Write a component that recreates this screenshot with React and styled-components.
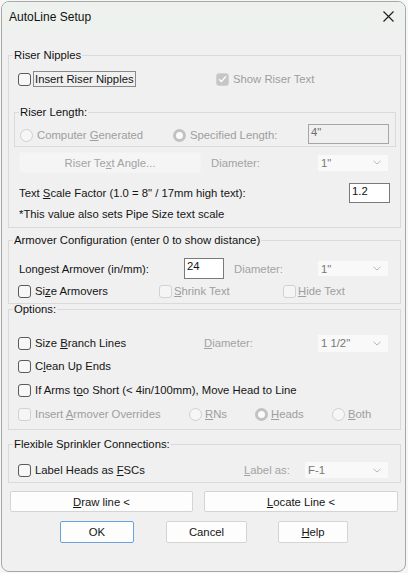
import React from "react";
import styled, { createGlobalStyle, css } from "styled-components";

const Global = createGlobalStyle`
  html, body { margin: 0; padding: 0; background: #f6f6f6; }
  body { font-family: "Liberation Sans", Arial, sans-serif; font-size: 11px; color: #1a1a1a; }
  * { box-sizing: border-box; }
`;

const FS = "11.3px";

const Page = styled.div`
  padding: 1px 0 0 1px;
`;

const Window = styled.div`
  width: 405px;
  height: 571px;
  border: 1px solid #a8a8a8;
  border-radius: 8px;
  background: #f0f0f0;
  overflow: hidden;
  display: flex;
  flex-direction: column;
`;

const TitleBar = styled.div`
  height: 29px;
  flex: none;
  background: #eef2ee;
  display: flex;
  align-items: center;
  justify-content: space-between;
  padding: 0 11px 0 7px;
`;

const Title = styled.span`
  font-size: 12px;
  color: #111;
`;

const Body = styled.div`
  padding: 17px 4px 0 6px;
  display: flex;
  flex-direction: column;
`;

const Group = styled.fieldset`
  margin: ${(p) => p.$mt || 0}px ${(p) => p.$mr || 0}px 0 ${(p) => p.$ml || 0}px;
  padding: 0 0 ${(p) => p.$pb || 0}px 4px;
  border: 1px solid #dadada;
  display: flex;
  flex-direction: column;
  min-width: 0;
`;

const Legend = styled.legend`
  padding: 0 1px;
  line-height: 14px;
  font-size: ${FS};
  color: #111;
`;

const Row = styled.div`
  display: flex;
  align-items: center;
  height: ${(p) => p.$h || 20}px;
  margin-top: ${(p) => p.$mt || 0}px;
  padding-left: ${(p) => p.$pl ?? 5}px;
`;

const Cell = styled.div`
  display: flex;
  align-items: center;
  width: ${(p) => p.$w}px;
  flex: none;
  height: 100%;
`;

const Box = styled.span`
  width: 13px;
  height: 13px;
  flex: none;
  border-radius: 3px;
  border: 1px solid ${(p) => (p.$disabled ? "#d2d2d2" : "#5a5a5a")};
  background: ${(p) => (p.$checked && p.$disabled ? "#c6c6c6" : p.$disabled ? "#f5f5f5" : "#f7f7f7")};
  display: flex;
  align-items: center;
  justify-content: center;
`;

const Round = styled.span`
  width: 13px;
  height: 13px;
  flex: none;
  border-radius: 50%;
  border: 1px solid #d0d0d0;
  background: #f6f6f6;
  display: flex;
  align-items: center;
  justify-content: center;
  ${(p) =>
    p.$checked &&
    css`
      border: 3.5px solid #c2c2c2;
      background: #fbfbfb;
    `}
`;

const Label = styled.span`
  margin-left: ${(p) => p.$ml ?? 4}px;
  color: ${(p) => (p.$disabled ? "#9e9e9e" : "#151515")};
  white-space: nowrap;
  font-size: ${FS};
  ${(p) =>
    p.$focus &&
    css`
      margin-left: 2px;
      padding: 1px 1px;
      border: 1px solid #8a8a8a;
      line-height: 12px;
    `}
`;

const Text = styled.span`
  color: ${(p) => (p.$disabled ? "#a3a3a3" : "#151515")};
  white-space: nowrap;
  font-size: ${FS};
  margin-left: ${(p) => p.$ml || 0}px;
`;

const Input = styled.div`
  width: ${(p) => p.$w}px;
  height: ${(p) => p.$h}px;
  flex: none;
  border: 1px solid ${(p) => (p.$disabled ? "#a6a6a6" : "#7a7a7a")};
  background: ${(p) => (p.$disabled ? "#f0f0f0" : "#fff")};
  color: ${(p) => (p.$disabled ? "#6d6d6d" : "#111")};
  font-size: ${FS};
  padding: 1px 0 0 2px;
  line-height: 13px;
  align-self: ${(p) => p.$align || "center"};
`;

const Combo = styled.div`
  width: ${(p) => p.$w}px;
  height: ${(p) => p.$h || 16}px;
  flex: none;
  background: #f9f9f9;
  color: #777;
  font-size: ${FS};
  display: flex;
  align-items: center;
  justify-content: space-between;
  padding: 0 7px 0 3px;
`;

const PushButton = styled.div`
  width: ${(p) => p.$w}px;
  height: ${(p) => p.$h || 21}px;
  flex: none;
  margin-left: ${(p) => p.$ml || 0}px;
  display: flex;
  align-items: center;
  justify-content: center;
  font-size: ${FS};
  border-radius: 2px;
  ${(p) =>
    p.$disabled
      ? css`
          background: #f5f5f5;
          color: #a3a3a3;
          border: 1px solid #f3f3f3;
        `
      : css`
          background: #fdfdfd;
          color: #151515;
          border: 1px solid ${p.$default ? "#6aa3db" : "#d4d4d4"};
        `}
`;

const ButtonRow = styled.div`
  display: flex;
  margin-top: ${(p) => p.$mt || 0}px;
  padding-left: ${(p) => p.$pl || 0}px;
  gap: ${(p) => p.$gap || 0}px;
`;

const U = styled.span`
  text-decoration: underline;
  text-underline-offset: 1px;
`;

const Check = () => (
  <svg width="9" height="8" viewBox="0 0 9 8">
    <path d="M1 4.2 L3.4 6.4 L8 1.4" fill="none" stroke="#fff" strokeWidth="1.4" />
  </svg>
);

const Chevron = () => (
  <svg width="8" height="5" viewBox="0 0 8 5">
    <path d="M0.5 0.8 L4 4 L7.5 0.8" fill="none" stroke="#b8b8b8" strokeWidth="1" />
  </svg>
);

const CloseIcon = () => (
  <svg width="11" height="11" viewBox="0 0 11 11">
    <path d="M0.5 0.5 L10.5 10.5 M10.5 0.5 L0.5 10.5" stroke="#1c1c1c" strokeWidth="1.1" />
  </svg>
);

const CheckBox = ({ checked, disabled }) => (
  <Box $checked={checked} $disabled={disabled}>
    {checked && <Check />}
  </Box>
);

export default function App() {
  return (
    <>
      <Global />
      <Page>
        <Window>
          <TitleBar>
            <Title>AutoLine Setup</Title>
            <CloseIcon />
          </TitleBar>
          <Body>
            <Group $pb={6}>
              <Legend>Riser Nipples</Legend>
              <Row $mt={7}>
                <Cell $w={198}>
                  <CheckBox />
                  <Label $focus>Insert Riser Nipples</Label>
                </Cell>
                <CheckBox checked disabled />
                <Label $disabled>Show Riser Text</Label>
              </Row>
              <Group $mt={16} $mr={4} $ml={1}>
                <Legend>Riser Length:</Legend>
                <Row $h={22} $mt={5} $pl={1}>
                  <Cell $w={153}>
                    <Round />
                    <Label $disabled>
                      Computer <U>G</U>enerated
                    </Label>
                  </Cell>
                  <Cell $w={135}>
                    <Round $checked />
                    <Label $disabled>Specified Length:</Label>
                  </Cell>
                  <Input $w={81} $h={20} $disabled $align="flex-start">
                    4"
                  </Input>
                </Row>
              </Group>
              <Row $h={21} $mt={5} $pl={6}>
                <PushButton $w={182} $disabled>
                  Riser Te<U>x</U>t Angle...
                </PushButton>
                <Cell $w={117}>
                  <Text $disabled $ml={10}>Diameter:</Text>
                </Cell>
                <Combo $w={70}>
                  1"
                  <Chevron />
                </Combo>
              </Row>
              <Row $mt={10} $pl={6}>
                <Cell $w={330}>
                  <Text>
                    Text <U>S</U>cale Factor (1.0 = 8" / 17mm high text):
                  </Text>
                </Cell>
                <Input $w={41} $h={20}>1.2</Input>
              </Row>
              <Row $h={14} $mt={4} $pl={6}>
                <Text>*This value also sets Pipe Size text scale</Text>
              </Row>
            </Group>

            <Group $mt={5} $pb={2}>
              <Legend>Armover Configuration (enter 0 to show distance)</Legend>
              <Row $h={21} $mt={11} $pl={6}>
                <Cell $w={165}>
                  <Text>Longest Armover (in/mm):</Text>
                </Cell>
                <Input $w={40} $h={21}>24</Input>
                <Cell $w={94}>
                  <Text $disabled $ml={10}>Diameter:</Text>
                </Cell>
                <Combo $w={70} $h={15}>
                  1"
                  <Chevron />
                </Combo>
              </Row>
              <Row $mt={2}>
                <Cell $w={141}>
                  <CheckBox />
                  <Label>
                    Si<U>z</U>e Armovers
                  </Label>
                </Cell>
                <Cell $w={124}>
                  <CheckBox disabled />
                  <Label $disabled $ml={2}>
                    <U>S</U>hrink Text
                  </Label>
                </Cell>
                <CheckBox disabled />
                <Label $disabled $ml={2}>
                  <U>H</U>ide Text
                </Label>
              </Row>
            </Group>

            <Group $mt={-2} $pb={5}>
              <Legend>Options:</Legend>
              <Row $mt={17}>
                <Cell $w={186}>
                  <CheckBox />
                  <Label>
                    Size <U>B</U>ranch Lines
                  </Label>
                </Cell>
                <Cell $w={114}>
                  <Text $disabled>
                    <U>D</U>iameter:
                  </Text>
                </Cell>
                <Combo $w={70} $h={17}>
                  1 1/2"
                  <Chevron />
                </Combo>
              </Row>
              <Row $mt={3}>
                <CheckBox />
                <Label>
                  C<U>l</U>ean Up Ends
                </Label>
              </Row>
              <Row $mt={4}>
                <CheckBox />
                <Label>
                  If Arms t<U>o</U>o Short (&lt; 4in/100mm), Move Head to Line
                </Label>
              </Row>
              <Row $mt={4}>
                <Cell $w={171}>
                  <CheckBox disabled />
                  <Label $disabled>
                    Insert <U>A</U>rmover Overrides
                  </Label>
                </Cell>
                <Cell $w={66}>
                  <Round />
                  <Label $disabled $ml={3}>
                    <U>R</U>Ns
                  </Label>
                </Cell>
                <Cell $w={77}>
                  <Round $checked />
                  <Label $disabled $ml={3}>
                    <U>H</U>eads
                  </Label>
                </Cell>
                <Round />
                <Label $disabled $ml={3}>
                  <U>B</U>oth
                </Label>
              </Row>
            </Group>

            <Group $mt={7} $pb={2}>
              <Legend>Flexible Sprinkler Connections:</Legend>
              <Row $mt={9}>
                <Cell $w={226}>
                  <CheckBox />
                  <Label>
                    Label Heads as <U>F</U>SCs
                  </Label>
                </Cell>
                <Cell $w={61}>
                  <Text $disabled>
                    <U>L</U>abel as:
                  </Text>
                </Cell>
                <Combo $w={83}>
                  F-1
                  <Chevron />
                </Combo>
              </Row>
            </Group>

            <ButtonRow $mt={8} $pl={2} $gap={11}>
              <PushButton $w={183}>
                <U>D</U>raw line &lt;
              </PushButton>
              <PushButton $w={194}>
                <U>L</U>ocate Line &lt;
              </PushButton>
            </ButtonRow>
            <ButtonRow $mt={9} $pl={52} $gap={32}>
              <PushButton $w={74} $h={22} $default>
                OK
              </PushButton>
              <PushButton $w={81} $h={22}>
                Cancel
              </PushButton>
              <PushButton $w={70} $h={22} $ml={-1}>
                <U>H</U>elp
              </PushButton>
            </ButtonRow>
          </Body>
        </Window>
      </Page>
    </>
  );
}
